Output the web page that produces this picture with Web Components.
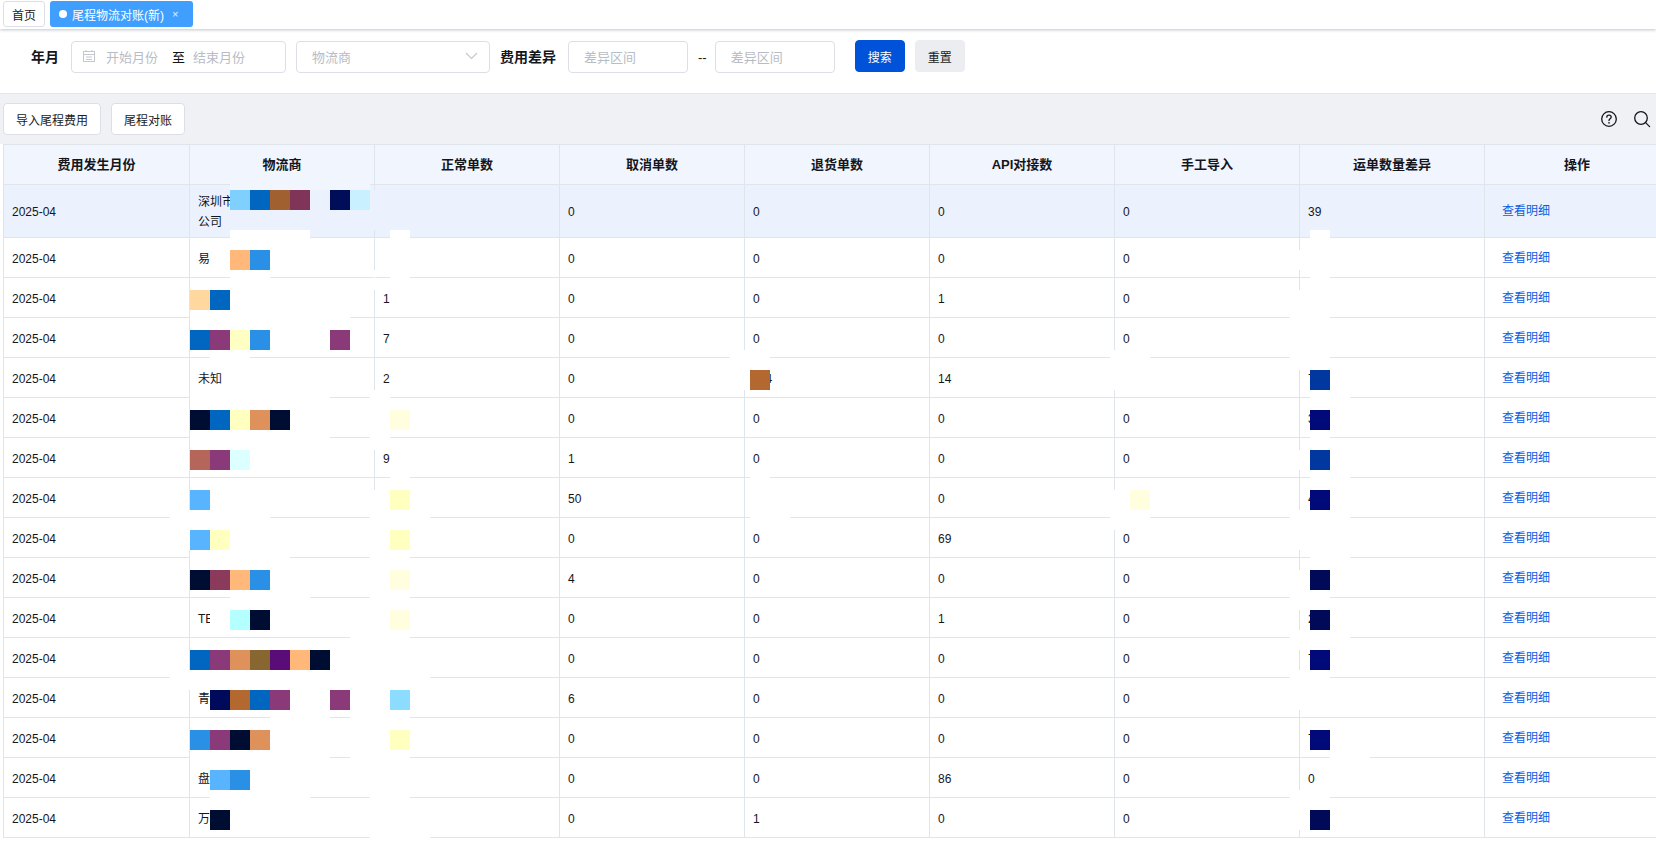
<!DOCTYPE html>
<html lang="zh">
<head>
<meta charset="utf-8">
<title>尾程物流对账</title>
<style>
html,body{margin:0;padding:0;height:843px;overflow:hidden;background:#fff}
body{font:12px "Liberation Sans","Noto Sans CJK SC",sans-serif;color:#14161c}
</style>
</head>
<body>
<app-page>
  <tab-bar>
    <tab-item>首页</tab-item>
    <tab-item active>尾程物流对账(新)</tab-item>
  </tab-bar>
  <filter-bar></filter-bar>
  <tool-bar>
    <ui-button>导入尾程费用</ui-button>
    <ui-button>尾程对账</ui-button>
  </tool-bar>
  <data-table></data-table>
  <redact-layer></redact-layer>
</app-page>
<script>
function el(name, html){
  customElements.define(name, class extends HTMLElement{
    constructor(){super();this.attachShadow({mode:'open'}).innerHTML=typeof html==='function'?html(this):html;}
  });
}
el('app-page',`<style>:host{display:block;position:relative;width:1656px;height:843px;overflow:hidden}</style><slot></slot>`);
el('tab-bar',`<style>:host{display:flex;box-sizing:border-box;height:29px;padding:1px 0 0 3px;gap:5px;background:#fff;box-shadow:0 1px 3px rgba(60,65,90,.3);position:relative}</style><slot></slot>`);
customElements.define('tab-item',class extends HTMLElement{
  constructor(){super();
    const a=this.hasAttribute('active');
    this.attachShadow({mode:'open'}).innerHTML=`<style>
    :host{display:flex;align-items:center;box-sizing:border-box;height:26px;border-radius:3px;font-size:12px;white-space:nowrap;padding:0 8px}
    :host(:not([active])){border:1px solid #dcdfe6;width:42px;justify-content:center;padding:0;color:#222}
    :host([active]){background:#409eff;color:#fff;width:143px;padding-left:9px}
    .dot{width:8px;height:8px;border-radius:50%;background:#fff;margin-right:5px}
    .x{font-size:11px;margin-left:8px;opacity:.85}
    </style>${a?'<i class="dot"></i>':''}<slot></slot>${a?'<span class="x">×</span>':''}`;
  }
});
el('field-input',`<style>
:host{display:flex;align-items:center;box-sizing:border-box;height:32px;border:1px solid #dcdfe6;border-radius:4px;background:#fff;font-size:13px;color:#b8bcc4;padding:0 0 2px 15px}
</style><slot></slot>`);
el('ui-button',`<style>
:host{display:flex;align-items:center;justify-content:center;box-sizing:border-box;height:32px;padding:0 12px;border:1px solid #dcdfe6;border-radius:4px;background:#fff;font-size:12px;color:#1a1c22;white-space:nowrap}
:host([primary]){background:#0052d9;border-color:#0052d9;color:#fff;width:50px;padding:0}
:host([soft]){background:#ebedf0;border-color:#ebedf0;width:50px;padding:0}
</style><slot></slot>`);
el('filter-bar',`<style>
:host{display:flex;align-items:center;box-sizing:border-box;height:65px;padding:0 0 8px 31px;background:#fff;border-bottom:1px solid #e4e6ea;margin-top:0}
b{font-size:14px;color:#14161c;font-weight:700;white-space:nowrap;margin-top:-2px}
.date{width:215px;margin-left:12px;padding-left:10px}
.date svg{margin-right:10px;flex:none}
.date span{white-space:nowrap}
.date .to{color:#14161c;margin:0 8px 0 14px}
.sel{width:194px;margin-left:10px;justify-content:space-between;padding-right:11px}
.f{margin-left:10px}
.inp{width:120px;margin-left:12px}
.dash{margin:0 8px 0 10px;color:#14161c;font-size:13px}
.inp2{width:120px}
.btn1{margin:-2px 0 0 20px}.btn2{margin:-2px 0 0 10px}
</style>
<b>年月</b>
<field-input class="date">
  <svg width="14" height="14" viewBox="0 0 14 14" fill="none" stroke="#c4c7ce" stroke-width="1"><rect x="1.5" y="2.5" width="11" height="10"/><path d="M1.5 5.5h11M4 1v2M10 1v2M4 8h6M4 10.5h6"/></svg>
  <span>开始月份</span><span class="to">至</span><span>结束月份</span>
</field-input>
<field-input class="sel"><span>物流商</span>
  <svg width="13" height="8" viewBox="0 0 13 8" fill="none" stroke="#c4c7ce" stroke-width="1.1"><path d="M1 1l5.5 5.5L12 1"/></svg>
</field-input>
<b class="f">费用差异</b>
<field-input class="inp">差异区间</field-input>
<span class="dash">--</span>
<field-input class="inp2">差异区间</field-input>
<ui-button primary class="btn1">搜索</ui-button>
<ui-button soft class="btn2">重置</ui-button>`);
el('tool-bar',`<style>
:host{display:flex;align-items:center;box-sizing:border-box;height:50px;padding:0 5px 0 3px;gap:10px;background:#f0f1f5}
.r{margin-left:auto;display:flex;align-items:center;gap:15px}
</style><slot></slot>
<div class="r">
<svg width="18" height="18" viewBox="0 0 18 18" fill="none" stroke="#14161c" stroke-width="1.3"><circle cx="9" cy="9" r="7.3"/><path d="M6.8 7.2c0-1.3 1-2.1 2.2-2.1s2.2.8 2.2 2c0 1.7-2.2 1.7-2.2 3.5" stroke-linecap="round"/><circle cx="9" cy="12.9" r=".8" fill="#14161c" stroke="none"/></svg>
<svg width="18" height="18" viewBox="0 0 18 18" fill="none" stroke="#14161c" stroke-width="1.3"><circle cx="8" cy="8" r="6.3"/><path d="M12.6 12.6l4 4" stroke-linecap="round"/></svg>
</div>`);
const heads=['费用发生月份','物流商','正常单数','取消单数','退货单数','API对接数','手工导入','运单数量差异','操作'];
const rows=[
['深圳市<br>公司','','0','0','0','0','39'],
['易','','0','0','0','0',''],
['','1','0','0','1','0',''],
['','7','0','0','0','0',''],
['未知','2','0','114','14','','7'],
['','','0','0','0','0','3'],
['','9','1','0','0','0',''],
['','','50','','0','','4'],
['','','0','0','69','0',''],
['','','4','0','0','0',''],
['TEMU','','0','0','1','0','2'],
['','','0','0','0','0','7'],
['青','','6','0','0','0',''],
['','','0','0','0','0','7'],
['盘','','0','0','86','0','0'],
['万','','0','1','0','0','']];
el('data-table',()=>`<style>
:host{display:block;width:1667px;margin-left:3px;border-top:1px solid #e0e5ec;border-left:1px solid #e0e5ec;font-size:12px;color:#14161c}
.row{display:grid;grid-template-columns:186px repeat(8,185px);height:40px}
.row.tall{height:53px;background:#ebf2fd}
.row.head{background:#f1f5fd;font-weight:700;font-size:13px}
.c{box-sizing:border-box;display:flex;align-items:center;padding:2px 8px 0;border-right:1px solid #e0e5ec;border-bottom:1px solid #e0e5ec;line-height:20px;white-space:nowrap}
.head .c{justify-content:center;padding-top:0}
a{color:#0e5ce0;padding-left:9px;text-decoration:none;margin-top:-2px}
</style>
<div class="row head">${heads.map(h=>`<div class="c">${h}</div>`).join('')}</div>
${rows.map((r,i)=>`<div class="row${i?'':' tall'}"><div class="c">2025-04</div>${r.map(v=>`<div class="c"><span>${v}</span></div>`).join('')}<div class="c"><a>查看明细</a></div></div>`).join('')}`);
const ry=[190,250,290,330,370,410,450,490,530,570,610,650,690,730,770,810];
const N='#000d33',B='#0066c0',P='#8a3a78',Y='#ffffc0',L='#ffffe0',O='#de915a',F='#ffb87a',S='#2a90e6',A='#58b4ff',K='#000a78',D='#000a58',C='#0038a0',W='#fff';
const squares=[
[0,230,'#80d0ff'],[0,250,B],[0,270,'#a06030'],[0,290,'#803558'],[0,330,'#000e5a'],[0,350,'#c8f0ff'],
[1,230,F],[1,250,S],
[2,190,'#ffd8a0'],[2,210,B],
[3,190,B],[3,210,P],[3,230,'#ffffc4'],[3,250,S],[3,330,P],
[4,750,'#b36830'],[4,1310,C],
[5,190,N],[5,210,B],[5,230,Y],[5,250,O],[5,270,N],[5,390,L],[5,1310,K],
[6,190,'#b5655a'],[6,210,P],[6,230,'#dcffff'],[6,1310,C],
[7,190,A],[7,390,Y],[7,1130,L],[7,1310,K],
[8,190,A],[8,210,Y],[8,390,Y],
[9,190,N],[9,210,'#8a3a5a'],[9,230,F],[9,250,S],[9,390,L],[9,1310,D],
[10,210,W],[10,230,'#b4ffff'],[10,250,N],[10,270,W],[10,390,L],[10,1310,D],
[11,190,B],[11,210,P],[11,230,O],[11,250,'#88662f'],[11,270,'#5a0d78'],[11,290,F],[11,310,N],[11,1310,K],
[12,210,'#000a5a'],[12,230,'#b36830'],[12,250,B],[12,270,P],[12,330,P],[12,390,'#8cdcff'],
[13,190,S],[13,210,P],[13,230,N],[13,250,O],[13,390,Y],[13,1310,K],
[14,210,A],[14,230,S],
[15,210,N],[15,1310,D]];
const hLines={237:[[230,310],[390,410],[1310,1330]],277:[[230,270],[390,410],[1310,1330]],317:[[190,350],[1290,1330]],
357:[[210,250],[730,770],[1110,1150],[1290,1330]],397:[[190,330],[370,390],[1310,1350]],437:[[190,330],[370,390],[1310,1330]],
477:[[390,410],[750,770],[1310,1350]],517:[[170,270],[370,430],[750,790],[1110,1150],[1290,1350]],557:[[190,290],[370,410],[1310,1350]],
597:[[230,310],[370,410],[1290,1330]],637:[[350,410],[1290,1350]],677:[[170,430],[1290,1330]],717:[[270,330],[350,410]],
757:[[190,330],[350,410],[1330,1370]],797:[[210,310],[370,410],[1290,1330]],837:[[370,430]]};
const vLines={189:[[510,550],[670,690]],374:[[190,230,'#ebf2fd'],[270,290],[390,450],[490,843]],744:[[350,390]],1114:[[350,390],[490,530]],
1299:[[250,270],[290,370],[450,470],[510,550],[570,610],[630,650],[670,710],[790,830]]};
el('redact-layer',()=>{
  const box=(x,y,w,h,c)=>`<i style="left:${x}px;top:${y}px;width:${w}px;height:${h}px;background:${c}"></i>`;
  let s='';
  s+=box(230,184,140,6,'#f1f5fd');
  s+=box(230,230,80,8,'#fff')+box(390,230,20,8,'#fff')+box(1310,230,20,8,'#fff');
  for(const y in hLines) for(const [a,b] of hLines[y]) s+=box(a,+y,b-a,1,'#fff');
  for(const x in vLines) for(const [a,b,c] of vLines[x]) s+=box(+x,a,1,b-a,c||'#fff');
  for(const [r,x,c] of squares) s+=box(x,ry[r],20,20,c);
  return `<style>:host{position:absolute;inset:0;pointer-events:none;display:block}i{position:absolute;display:block}</style>${s}`;
});
</script>
</body>
</html>
